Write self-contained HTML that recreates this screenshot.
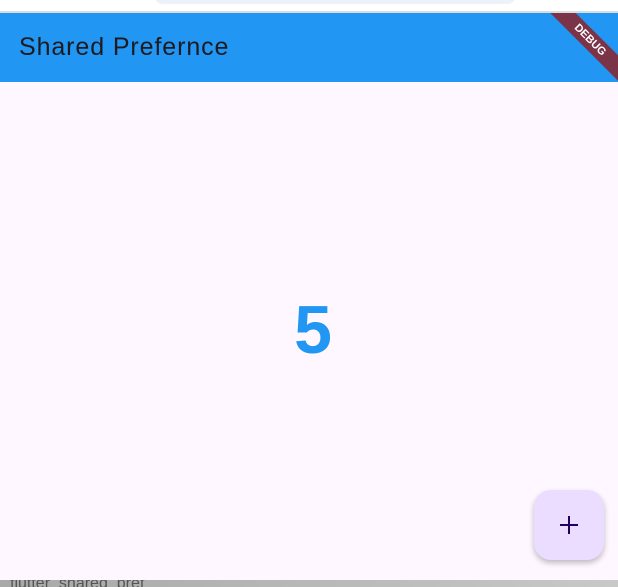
<!DOCTYPE html>
<html><head><style>
body{margin:0;width:618px;height:587px;overflow:hidden;background:#fff;font-family:"Liberation Sans",sans-serif;position:relative}
.pill{position:absolute;left:155px;top:-10px;width:360px;height:14px;background:#edf2fa;border-radius:8px}
.line{position:absolute;left:0;top:11px;width:618px;height:2px;background:#d9dfe0}
.bar{position:absolute;left:0;top:13px;width:618px;height:69px;background:#2196F3;overflow:hidden;z-index:2}
.title{position:absolute;left:19px;top:20px;font-size:25px;color:#1d1b20;letter-spacing:0.9px}
.ribbon{position:absolute;right:-42px;top:18px;width:140px;height:18px;background:#7b3348;transform:rotate(45deg);color:#fff;font-size:11px;font-weight:bold;text-align:center;line-height:18px}
.body{position:absolute;left:0;top:82px;width:618px;height:498px;background:#fef7ff;z-index:2}
.num{position:absolute;left:0;width:626px;top:290px;text-align:center;font-size:68px;font-weight:bold;color:#2196F3;line-height:80px;z-index:3}
.fab{position:absolute;left:534px;top:490px;width:70px;height:70px;background:#eaddff;border-radius:17px;box-shadow:0 3px 6px rgba(0,0,0,.25);z-index:3}
.bot{position:absolute;left:0;top:580px;width:618px;height:7px;background:linear-gradient(90deg,#a8a8a8,#c8c8c8);overflow:hidden;z-index:1}
.bot span{position:absolute;left:10px;top:-5px;font-size:16px;color:#555}
</style></head><body>
<div class="pill"></div><div class="line"></div>
<div class="bar"><div class="title">Shared Prefernce</div><div class="ribbon">DEBUG</div></div>
<div class="body"></div>
<div class="num">5</div>
<div class="fab"><svg width="70" height="70"><path d="M35 26v18M26 35h18" stroke="#21005d" stroke-width="2"/></svg></div>
<div class="bot"><span>flutter_shared_pref</span></div>
</body></html>
